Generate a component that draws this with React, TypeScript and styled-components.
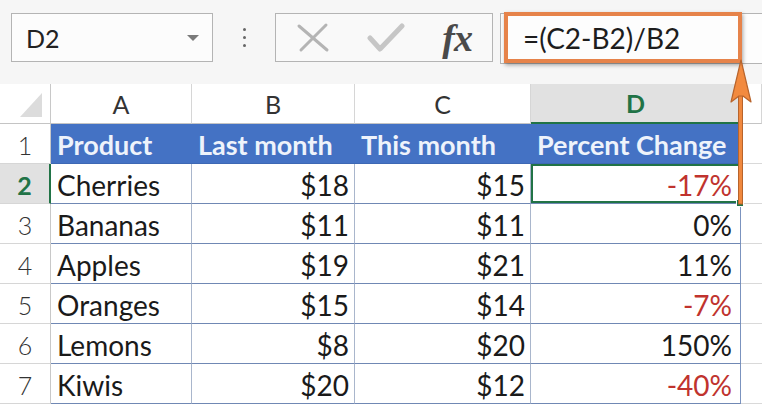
import React from "react";
import styled, { createGlobalStyle, css } from "styled-components";

const GlobalStyle = createGlobalStyle`
  html, body {
    margin: 0;
    padding: 0;
    background: #ffffff;
  }
  body {
    font-family: "Lato", "Open Sans", sans-serif;
  }
`;

const Page = styled.div`
  position: relative;
  width: 762px;
  height: 404px;
  overflow: hidden;
  background: #ffffff;
`;

const Toolbar = styled.div`
  display: flex;
  align-items: flex-start;
  height: 84px;
  padding: 13px 0 0 11px;
  box-sizing: border-box;
  background: #f6f6f6;
`;

const NameBox = styled.div`
  display: flex;
  align-items: center;
  justify-content: space-between;
  width: 202px;
  height: 49px;
  padding: 0 13px 0 14px;
  box-sizing: border-box;
  border: 1px solid #b4b4b4;
  background: #fcfcfc;
  font-size: 25px;
  color: #222;
`;

const Caret = styled.span`
  width: 0;
  height: 0;
  border-left: 6px solid transparent;
  border-right: 6px solid transparent;
  border-top: 6px solid #7a7a7a;
`;

const Dots = styled.div`
  display: flex;
  flex-direction: column;
  align-items: center;
  justify-content: center;
  gap: 5px;
  width: 62px;
  height: 49px;

  span {
    width: 3px;
    height: 3px;
    border-radius: 50%;
    background: #666;
  }
`;

const FuncBox = styled.div`
  display: flex;
  align-items: center;
  justify-content: space-between;
  width: 218px;
  height: 49px;
  padding: 0 20px 0 20px;
  box-sizing: border-box;
  border: 1px solid #b4b4b4;
  background: #f9f9f9;
`;

const Fx = styled.span`
  font-family: "Liberation Serif", "DejaVu Serif", serif;
  font-style: italic;
  font-weight: bold;
  font-size: 38px;
  line-height: 1;
  color: #4a4a4a;
  letter-spacing: -1px;
`;

const FormulaBar = styled.div`
  flex: 1;
  display: flex;
  height: 49px;
  margin-left: 7px;
  border-top: 1px solid #b4b4b4;
  border-bottom: 1px solid #b4b4b4;
  border-left: 1px solid #b4b4b4;
  background: #fdfdfd;
`;

const FormulaHighlight = styled.div`
  display: flex;
  align-items: center;
  width: 238px;
  height: 51px;
  margin: -2px 0 0 3px;
  padding-left: 15px;
  box-sizing: border-box;
  border: 4px solid #e6834a;
  box-shadow: 1px 2px 4px rgba(0, 0, 0, 0.35);
  font-size: 28px;
  color: #1d1d1d;
`;

const Sheet = styled.div`
  display: grid;
  grid-template-columns: 51px 141px 163px 176px 210px 21px;
  grid-auto-rows: 40px;
`;

const Corner = styled.div`
  position: relative;
  border-right: 1px solid #c8c8c8;
  border-bottom: 1px solid #c4c4c4;
  background: #ffffff;

  &::after {
    content: "";
    position: absolute;
    right: 8px;
    bottom: 6px;
    width: 22px;
    height: 24px;
    background: #dcdcdc;
    clip-path: polygon(100% 0, 100% 100%, 0 100%);
  }
`;

const ColHead = styled.div<{ $active?: boolean }>`
  display: flex;
  align-items: center;
  justify-content: center;
  box-sizing: border-box;
  font-size: 25px;
  color: #333;
  border-right: 1px solid #d6d6d6;
  border-bottom: 1px solid #c4c4c4;
  background: #ffffff;
  ${(p) =>
    p.$active &&
    css`
      background: #e1e1e1;
      color: #217346;
      font-weight: bold;
      border-bottom: 2px solid #217346;
    `}
`;

const RowNum = styled.div<{ $active?: boolean }>`
  display: flex;
  align-items: center;
  justify-content: center;
  box-sizing: border-box;
  padding-top: 3px;
  font-size: 25px;
  font-weight: 300;
  color: #333;
  border-right: 1px solid #c8c8c8;
  border-bottom: 1px solid #d6d6d6;
  background: #ffffff;
  ${(p) =>
    p.$active &&
    css`
      background: #e1e1e1;
      color: #217346;
      font-weight: bold;
      border-right: 2px solid #217346;
    `}
`;

const HeadCell = styled.div`
  display: flex;
  align-items: center;
  box-sizing: border-box;
  padding: 2px 0 0 6px;
  background: #4472c4;
  color: #eef3fb;
  font-weight: bold;
  font-size: 27px;
  white-space: nowrap;
  border-bottom: 1px solid #3d68b4;
`;

const Cell = styled.div<{ $align?: "left" | "right"; $neg?: boolean; $selected?: boolean; $last?: boolean }>`
  position: relative;
  display: flex;
  align-items: center;
  justify-content: ${(p) => (p.$align === "right" ? "flex-end" : "flex-start")};
  box-sizing: border-box;
  padding: 3px ${(p) => (p.$last ? 8 : 5)}px 0 6px;
  font-size: 28px;
  color: ${(p) => (p.$neg ? "#c0332e" : "#1a1a1a")};
  background: #ffffff;
  white-space: nowrap;
  border-right: 1px solid ${(p) => (p.$last ? "#7b93bf" : "#a9b6cc")};
  border-bottom: 1px solid #7088b4;
  ${(p) =>
    p.$selected &&
    css`
      box-shadow: inset 0 0 0 2px #217346;
      &::after {
        content: "";
        position: absolute;
        right: -4px;
        bottom: -4px;
        width: 6px;
        height: 6px;
        background: #217346;
        border: 1px solid #ffffff;
        z-index: 2;
      }
    `}
`;

const Blank = styled.div`
  border-bottom: 1px solid #d9d9d9;
  background: #ffffff;
`;

const Arrow = styled.svg`
  position: absolute;
  left: 726px;
  top: 58px;
  z-index: 3;
`;

type Row = { product: string; last: string; cur: string; pct: string; neg?: boolean };

const rows: Row[] = [
  { product: "Cherries", last: "$18", cur: "$15", pct: "-17%", neg: true },
  { product: "Bananas", last: "$11", cur: "$11", pct: "0%" },
  { product: "Apples", last: "$19", cur: "$21", pct: "11%" },
  { product: "Oranges", last: "$15", cur: "$14", pct: "-7%", neg: true },
  { product: "Lemons", last: "$8", cur: "$20", pct: "150%" },
  { product: "Kiwis", last: "$20", cur: "$12", pct: "-40%", neg: true },
];

export default function App() {
  return (
    <Page>
      <GlobalStyle />
      <Toolbar>
        <NameBox>
          D2
          <Caret />
        </NameBox>
        <Dots>
          <span />
          <span />
          <span />
        </Dots>
        <FuncBox>
          <svg width="34" height="34" viewBox="0 0 34 34">
            <path d="M3 5 L31 29 M30 4 L5 29" stroke="#b4b4b4" strokeWidth="3" strokeLinecap="round" fill="none" />
          </svg>
          <svg width="38" height="34" viewBox="0 0 38 34">
            <path d="M3 17 L13 28 L35 5" stroke="#c6c6c6" strokeWidth="5" strokeLinecap="round" strokeLinejoin="round" fill="none" />
          </svg>
          <Fx>fx</Fx>
        </FuncBox>
        <FormulaBar>
          <FormulaHighlight>=(C2-B2)/B2</FormulaHighlight>
        </FormulaBar>
      </Toolbar>

      <Sheet>
        <Corner />
        <ColHead>A</ColHead>
        <ColHead>B</ColHead>
        <ColHead>C</ColHead>
        <ColHead $active>D</ColHead>
        <ColHead />

        <RowNum>1</RowNum>
        <HeadCell>Product</HeadCell>
        <HeadCell>Last month</HeadCell>
        <HeadCell>This month</HeadCell>
        <HeadCell>Percent Change</HeadCell>
        <Blank />

        {rows.map((r, i) => (
          <React.Fragment key={r.product}>
            <RowNum $active={i === 0}>{i + 2}</RowNum>
            <Cell>{r.product}</Cell>
            <Cell $align="right">{r.last}</Cell>
            <Cell $align="right">{r.cur}</Cell>
            <Cell $align="right" $neg={r.neg} $selected={i === 0} $last>
              {r.pct}
            </Cell>
            <Blank />
          </React.Fragment>
        ))}
      </Sheet>

      <Arrow width="30" height="150" viewBox="0 0 30 150">
        <rect x="12.5" y="30" width="4" height="116" fill="#f0883e" stroke="#b8642c" strokeWidth="1" />
        <path d="M15 2 L25 44 L17 38 L13 38 L5 44 Z" fill="#f28a3f" stroke="#b8642c" strokeWidth="1.2" strokeLinejoin="round" />
      </Arrow>
    </Page>
  );
}
